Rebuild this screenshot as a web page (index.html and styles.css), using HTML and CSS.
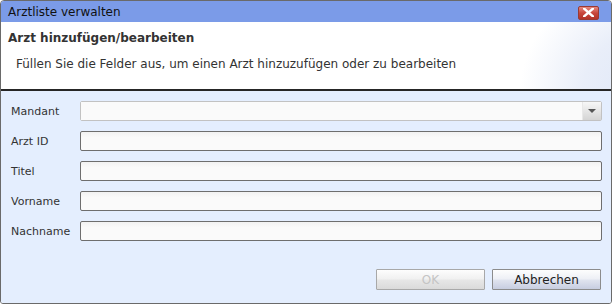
FILE: index.html
```html
<!DOCTYPE html>
<html lang="de">
<head>
    <meta charset="UTF-8">
    <title>Arztliste verwalten</title>
    <link rel="stylesheet" href="styles.css">
</head>
<body>
    <div class="window">
        <div class="titlebar">
            <span class="title">Arztliste verwalten</span>
            <button class="close-btn" title="Schließen">
                <svg width="11" height="9" viewBox="0 0 11 9">
                    <path d="M1 0.5 L10 8.5 M10 0.5 L1 8.5" stroke="#fff" stroke-width="2.4" stroke-linecap="square"/>
                </svg>
            </button>
        </div>

        <div class="header">
            <h1>Arzt hinzufügen/bearbeiten</h1>
            <p>Füllen Sie die Felder aus, um einen Arzt hinzuzufügen oder zu bearbeiten</p>
        </div>
        <div class="divider"></div>

        <form class="body" id="arztForm">
            <div class="row">
                <label for="mandant">Mandant</label>
                <div class="combo">
                    <input type="text" id="mandant" disabled>
                    <span class="combo-arrow"></span>
                </div>
            </div>
            <div class="row">
                <label for="arztId">Arzt ID</label>
                <input type="text" id="arztId">
            </div>
            <div class="row">
                <label for="titel">Titel</label>
                <input type="text" id="titel">
            </div>
            <div class="row">
                <label for="vorname">Vorname</label>
                <input type="text" id="vorname">
            </div>
            <div class="row">
                <label for="nachname">Nachname</label>
                <input type="text" id="nachname">
            </div>

            <div class="actions">
                <button type="submit" class="btn" disabled>OK</button>
                <button type="button" class="btn">Abbrechen</button>
            </div>
        </form>
    </div>
</body>
</html>
```

FILE: styles.css
```css
body {
    margin: 0;
    background: #fff;
    font-family: 'DejaVu Sans', Verdana, sans-serif;
}

.window {
    width: 610px;
    height: 302px;
    border: 1px solid #6a6a6a;
    border-radius: 4px 4px 3px 3px;
    overflow: hidden;
    display: flex;
    flex-direction: column;
}

.titlebar {
    height: 21px;
    background: #7b9be8;
    display: flex;
    align-items: center;
    justify-content: space-between;
    padding: 0 12px 0 7px;
}

.title {
    font-size: 12px;
    color: #111;
}

.close-btn {
    width: 21px;
    height: 14px;
    margin-top: 2px;
    padding: 0;
    border: 1px solid #9a3a33;
    border-radius: 2px;
    background: linear-gradient(#e48a80, #c8473c 50%, #b23328);
    display: flex;
    align-items: center;
    justify-content: center;
}

.header {
    height: 67px;
    background: radial-gradient(ellipse 140px 120px at 108% 105%, #dde6f7 0%, #e9eef9 55%, rgba(255, 255, 255, 0) 100%), #fff;
    padding-left: 7px;
}

.header h1 {
    margin: 0;
    padding-top: 9px;
    font-size: 12px;
    font-weight: bold;
    color: #333;
}

.header p {
    margin: 0;
    padding: 12px 0 0 8px;
    font-size: 12px;
    color: #333;
}

.divider {
    height: 2px;
    background: #262626;
}

.body {
    flex: 1;
    margin: 0;
    background: #e4eefe;
    padding: 10px 9px 13px 10px;
    display: flex;
    flex-direction: column;
    gap: 10px;
}

.row {
    display: flex;
    align-items: center;
    height: 20px;
}

.row label {
    width: 69px;
    font-size: 11px;
    color: #333;
}

.row input,
.combo {
    flex: 1;
    box-sizing: border-box;
    height: 20px;
}

.row input {
    border: 1px solid #6e6e6e;
    border-radius: 2px;
    background: linear-gradient(#f2f2f2, #fafafa 30%, #fafafa);
    margin: 0;
    padding: 0 4px;
    font-family: inherit;
    font-size: 11px;
    outline: none;
}

.combo {
    display: flex;
    border: 1px solid #c2c2c2;
    border-radius: 2px;
    background: #fafafa;
}

.combo input {
    flex: 1;
    height: 18px;
    border: none;
    border-radius: 0;
    background: #fafafa;
}

.combo-arrow {
    width: 18px;
    background: linear-gradient(#f7f7f7, #e2e2e2 60%, #d4d4d4);
    border-left: 1px solid #e8e8e8;
    position: relative;
}

.combo-arrow::after {
    content: '';
    position: absolute;
    left: 5px;
    top: 7px;
    border-left: 4px solid transparent;
    border-right: 4px solid transparent;
    border-top: 4px solid #555;
}

.actions {
    margin-top: auto;
    display: flex;
    justify-content: flex-end;
    gap: 7px;
    padding-right: 1px;
}

.btn {
    width: 109px;
    height: 21px;
    border: 1px solid #8c8c8c;
    border-radius: 1px;
    background: linear-gradient(#fdfdfd, #eef0f6 45%, #dfe3ee 55%, #c7cde0);
    font-family: 'DejaVu Sans', Verdana, sans-serif;
    font-size: 12px;
    color: #222;
    padding: 0;
}

.btn:disabled {
    border-color: #a8a8a8;
    background: linear-gradient(#fdfdfd, #f1f1f1 45%, #e6e6e6 55%, #dadada);
    color: #c4c4c4;
}
```
